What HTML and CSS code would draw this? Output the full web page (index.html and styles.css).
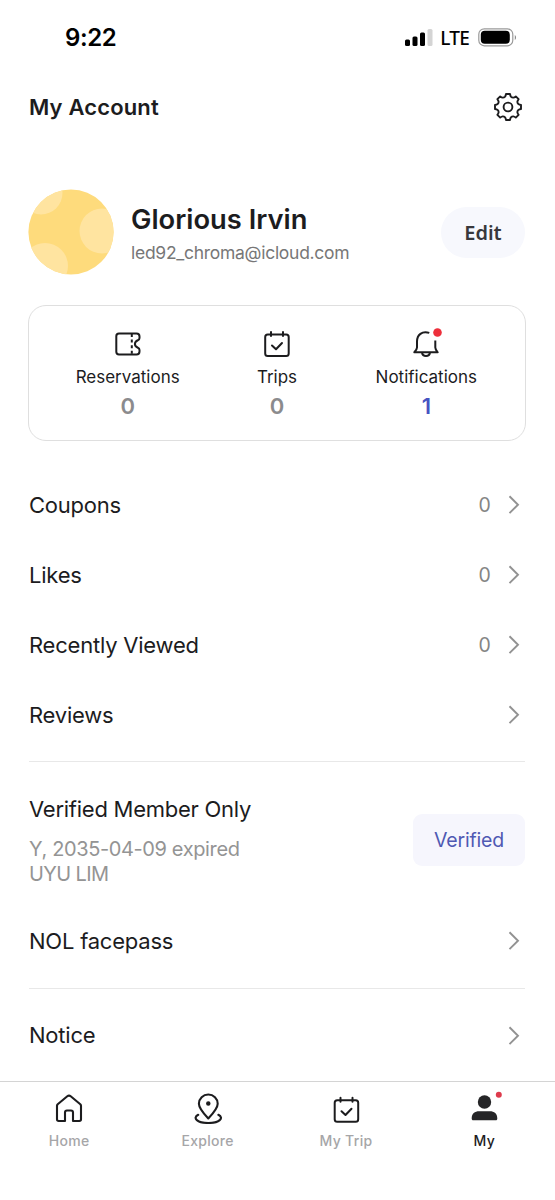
FILE: index.html
```html
<!DOCTYPE html>
<html lang="en">
<head>
<meta charset="utf-8">
<title>My Account</title>
<link rel="stylesheet" href="styles.css">
</head>
<body>
<svg class="defs" width="0" height="0" aria-hidden="true">
  <symbol id="chevron" viewBox="0 0 12 20"><path d="M1.500 1.300 10 9.700l-8.500 8.400" fill="none" stroke="#929292" stroke-width="1.900"/></symbol>
  <symbol id="calendar" viewBox="0 0 28 28"><g fill="none" stroke="#1c1c1e" stroke-width="2" stroke-linecap="round" stroke-linejoin="round"><rect x="2.200" y="4.500" width="23.500" height="21.500" rx="2.500"/><path d="M8 2v4M20 2v4M9 15.500l4 3.800 6-6.300"/></g></symbol>
</svg>
<div class="screen">
  <header class="status">
    <span class="clock">9:22</span>
    <div class="indicators">
      <svg class="signal" width="28" height="18" viewBox="0 0 28 18"><rect x="0" y="10.500" width="5" height="6.500" rx="1.500"/><rect x="7.500" y="7.500" width="5" height="9.500" rx="1.500"/><rect x="15" y="3.500" width="5" height="13.500" rx="1.500"/><rect x="22.500" y="0" width="5" height="17" rx="1.500" fill="#d4d4d4"/></svg>
      <span class="network">LTE</span>
      <svg class="battery" width="39" height="19" viewBox="0 0 39 19"><rect x=".8" y=".8" width="34" height="17" rx="5.500" fill="none" stroke="#9a9a9a" stroke-width="1.200"/><rect x="2.800" y="2.800" width="29" height="13" rx="4"/><path d="M36.800 7c1.600.7 1.600 4.300 0 5z" fill="#888"/></svg>
    </div>
  </header>
  <div class="titlebar">
    <h1>My Account</h1>
    <svg width="30" height="30" viewBox="-15 -15 30 30" fill="none" stroke="#1c1c1e" stroke-width="1.900" stroke-linejoin="round"><path d="M-2-13H2Q2.300-11.200 2.900-10.400Q4-9.300 5.300-9.400Q6.300-9.500 7.800-10.600L10.600-7.800Q9.500-6.300 9.400-5.300Q9.300-4 10.400-2.900Q11.200-2.300 13-2V2Q11.200 2.300 10.400 2.900Q9.300 4 9.400 5.300Q9.500 6.300 10.600 7.800L7.800 10.600Q6.300 9.500 5.300 9.400Q4 9.300 2.900 10.400Q2.300 11.200 2 13H-2Q-2.300 11.200-2.900 10.400Q-4 9.300-5.300 9.400Q-6.300 9.500-7.800 10.600L-10.600 7.800Q-9.500 6.300-9.400 5.300Q-9.300 4-10.400 2.900Q-11.200 2.300-13 2V-2Q-11.200-2.300-10.400-2.900Q-9.300-4-9.400-5.300Q-9.500-6.300-10.600-7.800L-7.800-10.600Q-6.300-9.500-5.300-9.400Q-4-9.300-2.900-10.400Q-2.300-11.200-2-13z"/><circle r="4.400"/></svg>
  </div>
  <section class="profile">
    <svg class="avatar" width="86" height="86" viewBox="0 0 86 86"><defs><clipPath id="disc"><circle cx="43" cy="43" r="42.600"/></clipPath></defs><g clip-path="url(#disc)"><path fill="#fedb7c" d="M0 0h86v86H0z"/><g fill="#ffe4a0"><circle cx="13" cy="4" r="21.500"/><circle cx="74" cy="42" r="22.500"/><circle cx="17" cy="77" r="23"/></g></g></svg>
    <div class="identity"><h2>Glorious Irvin</h2><p>led92_chroma@icloud.com</p></div>
    <button class="edit">Edit</button>
  </section>
  <section class="summary">
    <div class="stat">
      <svg width="28" height="28" viewBox="0 0 28 28" fill="none" stroke="#1c1c1e" stroke-width="2" stroke-linejoin="round"><path d="M5 3.500h17.500q3 0 3 3v1.500q0 1.700-1.600 2.300-3 1.200-3 3.700t3 3.700q1.600.6 1.600 2.300v1.500q0 3-3 3H5q-2.700 0-2.700-2.700V6.200Q2.300 3.500 5 3.500z"/><path d="M17.800 4v20.500" stroke-dasharray="3 2.600"/></svg>
      <span class="label">Reservations</span><strong>0</strong>
    </div>
    <div class="stat">
      <svg width="28" height="28"><use href="#calendar"/></svg>
      <span class="label">Trips</span><strong>0</strong>
    </div>
    <div class="stat">
      <svg class="bell" width="28" height="28" viewBox="0 0 28 28" fill="none" stroke="#1c1c1e" stroke-width="2" stroke-linejoin="round"><path d="M17.300 2.900C10 .5 5 5 5 11.500v6Q5 19.500 2.300 22.300h23.400Q23.300 19.500 23.300 17.500V10.500M10 22.500c.7 4.700 7.300 4.700 8 0"/><circle cx="25.500" cy="2.500" r="4.300" fill="#ed2f3b" stroke="none"/></svg>
      <span class="label">Notifications</span><strong class="active">1</strong>
    </div>
  </section>
  <nav class="menu">
    <a class="row"><span>Coupons</span><em>0</em><svg width="12" height="20"><use href="#chevron"/></svg></a>
    <a class="row"><span>Likes</span><em>0</em><svg width="12" height="20"><use href="#chevron"/></svg></a>
    <a class="row"><span>Recently Viewed</span><em>0</em><svg width="12" height="20"><use href="#chevron"/></svg></a>
    <a class="row"><span>Reviews</span><svg width="12" height="20"><use href="#chevron"/></svg></a>
    <div class="member">
      <div class="details"><h3>Verified Member Only</h3><p class="expiry">Y, 2035-04-09 expired</p><p class="holder">UYU LIM</p></div>
      <button class="verified">Verified</button>
    </div>
    <a class="row facepass"><span>NOL facepass</span><svg width="12" height="20"><use href="#chevron"/></svg></a>
    <a class="row notice"><span>Notice</span><svg width="12" height="20"><use href="#chevron"/></svg></a>
  </nav>
  <footer class="tabs">
    <a class="tab"><svg width="30" height="32" viewBox="0 0 30 32" fill="none" stroke="#1c1c1e" stroke-width="2.100" stroke-linejoin="round"><path d="M3 13.800Q3 13 3.700 12.300L13.300 4.300q1.700-1.400 3.400 0l9.600 8q.7.700.7 1.500v13.500q0 1.700-1.700 1.700H19V20.500q0-2-2-2h-4q-2 0-2 2V29H4.700Q3 29 3 27.300z"/></svg><span>Home</span></a>
    <a class="tab"><svg width="30" height="32" viewBox="0 0 30 32" fill="none" stroke="#1c1c1e" stroke-width="2.100" stroke-linecap="round" stroke-linejoin="round"><path d="M15.300 26.500Q5.900 16.500 5.900 11.700a9.400 9.200 0 0 1 18.800 0Q24.700 16.500 15.300 26.500zM5.200 22.800C-1 26 4.500 31 15.300 31S31.600 26 25.400 22.800"/><circle cx="15.300" cy="11.500" r="1.500" fill="#1c1c1e" stroke-width="1.500"/></svg><span class="explore">Explore</span></a>
    <a class="tab"><svg width="30" height="32" viewBox="-1.500 -3.700 30 32"><use href="#calendar" width="28" height="28"/></svg><span>My Trip</span></a>
    <a class="tab current"><svg class="person" width="30" height="32" viewBox="0 0 30 32" fill="#252527"><circle cx="15.500" cy="10" r="6.700"/><path d="M2.700 26.500c0-5 3-7.300 7.500-7.300h10.600c4.500 0 7.500 2.300 7.500 7.300 0 1-.5 1.800-1.500 1.800H4.200c-1 0-1.500-.8-1.500-1.800z"/><circle cx="29.800" cy="2.700" r="3" fill="#de3b4c"/></svg><span>My</span></a>
  </footer>
</div>
</body>
</html>
```
FILE: styles.css
```css
* { box-sizing: border-box; }
body, h1, h2, h3, p { margin: 0; }
body { background: #fff; color: #1c1c1e; font-family: Inter, sans-serif; }
button { border: 0; padding: 0; }
svg { flex: none; }
.defs { display: block; height: 0; }
.screen { width: 555px; height: 1200px; display: flex; flex-direction: column; overflow: hidden; }
.status { height: 75px; padding: 0 38px 0 65px; display: flex; justify-content: space-between; align-items: center; color: #000; }
.clock { font-size: 24px; font-weight: 600; letter-spacing: -.4px; }
.indicators { display: flex; align-items: center; gap: 8px; }
.network { font: 500 19px/20px "Noto Sans", sans-serif; letter-spacing: -0.8px; margin: 0 1px 0 -1px; }
.titlebar { height: 64px; padding: 0 32px 0 29px; display: flex; justify-content: space-between; align-items: center; }
h1 { font-size: 22px; font-weight: 600; letter-spacing: .15px; }
.profile { height: 166px; padding: 20px 30px 0 28px; display: flex; align-items: center; }
.identity { margin-left: 17px; flex: 1; padding-top: 4px; }
h2 { font-size: 27.300px; line-height: 34px; font-weight: 600; }
.identity p { font-size: 17.500px; line-height: 24px; margin-top: 4px; color: #777; letter-spacing: -.28px; }
.edit { width: 84px; height: 51px; border-radius: 26px; background: #f7f8fd; color: #38383c; font: 600 20px "Noto Sans", sans-serif; }
.summary { height: 136px; margin: 0 29px 0 28px; padding: 24px 24px 0; border: 1.500px solid #dfdfdf; border-radius: 18px; display: grid; grid-template-columns: repeat(3, 1fr); }
.stat { display: flex; flex-direction: column; align-items: center; }
.bell { overflow: visible; }
.label { margin-top: 7px; font-size: 17px; line-height: 24px; }
.stat strong { margin-top: 2px; font-size: 22px; line-height: 30px; font-weight: 600; color: #8b8b8d; }
.stat .active { color: #4653c1; }
.menu { flex: 1; padding: 29px 30px 0 29px; min-height: 0; }
.row { height: 70px; display: flex; align-items: center; padding-right: 5px; font-size: 22px; letter-spacing: -.22px; }
.row span { flex: 1; margin-top: -1px; }
.row em { font-style: normal; font-size: 19.500px; color: #858585; margin-right: 17.500px; }
.member { height: 144px; border-top: 1px solid #e8e8e8; margin-top: 11px; padding-top: 32px; display: flex; justify-content: space-between; }
h3 { font-size: 22px; line-height: 30px; font-weight: 400; letter-spacing: -.25px; }
.details p { font-size: 20px; line-height: 24px; color: #949494; letter-spacing: -.38px; }
.details .expiry { margin-top: 13px; }
.details .holder { margin-top: 1px; letter-spacing: -.6px; }
.verified { width: 112px; height: 52px; margin-top: 20px; border-radius: 9px; background: #f6f6fd; color: #4f59b3; font: 400 19.500px Inter, sans-serif; letter-spacing: -.2px; }
.facepass { height: 83px; padding-bottom: 11px; }
.notice { border-top: 1px solid #e8e8e8; height: 94px; }
.tabs { height: 119px; flex: none; border-top: 1px solid #d4d4d4; display: grid; grid-template-columns: repeat(4, 138.400px); background: #fff; }
.tab { display: flex; flex-direction: column; align-items: center; padding-top: 10px; color: #a6a6a8; font-size: 14px; line-height: 20px; font-weight: 500; }
.tab span { margin-top: 7px; letter-spacing: .3px; }
.person { overflow: visible; }
.current { color: #1c1c1e; }
```
